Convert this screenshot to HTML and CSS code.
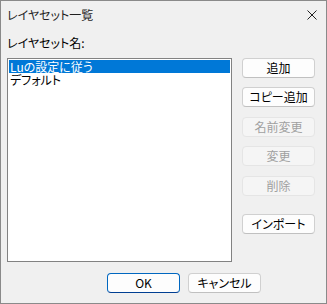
FILE: index.html
```html
<!DOCTYPE html>
<html lang="ja">
<head>
<meta charset="utf-8">
<title>レイヤセット一覧</title>
<link rel="stylesheet" href="styles.css">
</head>
<body>
<div class="window">
  <div class="titlebar">
    <span class="title">レイヤセット一覧</span>
    <svg class="close" width="10" height="10" viewBox="0 0 10 10"><path d="M0.5 0.5 L9.5 9.5 M9.5 0.5 L0.5 9.5" stroke="#222" stroke-width="1" fill="none"/></svg>
  </div>
  <div class="content">
    <div class="label">レイヤセット名:</div>
    <div class="main">
      <div class="list">
        <div class="item selected">Luの設定に従う</div>
        <div class="item">デフォルト</div>
      </div>
      <div class="side">
        <button class="btn">追加</button>
        <button class="btn">コピー追加</button>
        <button class="btn disabled">名前変更</button>
        <button class="btn disabled">変更</button>
        <button class="btn disabled">削除</button>
        <button class="btn import">インポート</button>
      </div>
    </div>
    <div class="footer">
      <button class="btn default">OK</button>
      <button class="btn">キャンセル</button>
    </div>
  </div>
</div>
</body>
</html>
```
FILE: styles.css
```css
html, body {
  margin: 0;
  padding: 0;
}
body {
  width: 327px;
  height: 304px;
  font-family: "Noto Sans CJK JP", "Noto Sans", sans-serif;
  font-size: 12px;
  font-feature-settings: "palt";
  color: #000;
  background: #f0f0f0;
}
.window {
  box-sizing: border-box;
  width: 327px;
  height: 304px;
  border: 1px solid #8a8a8a;
  background: #f0f0f0;
  display: flex;
  flex-direction: column;
}
.titlebar {
  height: 27px;
  display: flex;
  align-items: center;
  justify-content: space-between;
  padding: 0 9px 0 6px;
}
.title {
  color: #1f1f1f;
  line-height: 16px;
  margin-top: 1px;
}
.close {
  display: block;
}
.content {
  padding: 7px 0 0 6px;
  display: flex;
  flex-direction: column;
}
.label {
  line-height: 16px;
  height: 16px;
  margin-bottom: 7px;
}
.main {
  display: flex;
  gap: 10px;
}
.list {
  box-sizing: border-box;
  width: 225px;
  height: 204px;
  background: #fff;
  border: 1px solid #828282;
  padding: 1px 1px 0;
}
.item {
  height: 13px;
  line-height: 13px;
  padding: 0 1px;
  white-space: nowrap;
}
.item.selected {
  background: #0078d7;
  color: #fff;
}
.side {
  display: flex;
  flex-direction: column;
  gap: 9.4px;
}
.btn {
  box-sizing: border-box;
  width: 73px;
  height: 20px;
  padding: 0;
  font-family: inherit;
  font-size: 12px;
  font-feature-settings: "palt";
  color: #000;
  background: #fdfdfd;
  border: 1px solid #d0d0d0;
  border-bottom-color: #c0c0c0;
  border-radius: 4px;
  line-height: 18px;
}
.btn.disabled {
  background: #f5f5f5;
  border-color: #e5e5e5;
  color: #a0a0a0;
}
.btn.import {
  margin-top: 9px;
}
.btn.default {
  border-color: #0067c0;
  border-bottom-color: #003e92;
  background: #fdfdfd;
}
.footer {
  display: flex;
  gap: 8px;
  margin-top: 11px;
  padding-left: 100px;
}
```
